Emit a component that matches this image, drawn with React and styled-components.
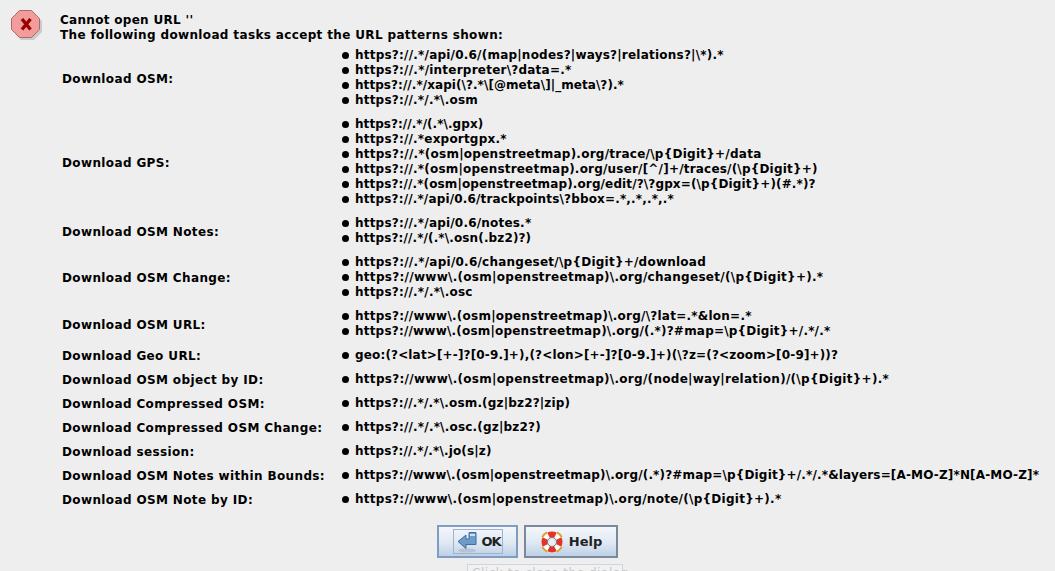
import React from 'react'
import styled, { createGlobalStyle } from 'styled-components'

const GlobalStyle = createGlobalStyle`
  html, body {
    margin: 0;
    padding: 0;
    width: 1055px;
    height: 571px;
    overflow: hidden;
    background: #eeeeee;
  }
  body {
    font-family: "DejaVu Sans", sans-serif;
    font-weight: bold;
    font-size: 12px;
    color: #000;
  }
`

const Dialog = styled.div`
  width: 1055px;
  height: 571px;
  box-sizing: border-box;
  padding: 10px 0 0 11px;
  display: flex;
  flex-direction: column;
  position: relative;
  overflow: hidden;
`
const Top = styled.div`
  display: flex;
`
const IconSlot = styled.div`
  width: 49px;
  flex: none;
`
const Intro = styled.div`
  padding-top: 3px;
  line-height: 15px;
  letter-spacing: 0.355px;
`
const IntroLine = styled.div`
  letter-spacing: ${p => p.$ls || 'inherit'};
`
const Table = styled.div`
  margin: 4px 0 0 51px;
  display: flex;
  flex-direction: column;
  gap: 9px;
`
const Row = styled.div`
  display: flex;
  align-items: center;
`
const Label = styled.div`
  width: 280px;
  flex: none;
  margin-top: 1px;
  letter-spacing: 0.37px;
`
const Patterns = styled.ul`
  list-style: none;
  margin: 0;
  padding: 0;
`
const Pattern = styled.li`
  height: 15px;
  line-height: 15px;
  padding-left: 13px;
  position: relative;
  white-space: nowrap;
  letter-spacing: ${p => p.$ls ?? 0.2}px;
  &::before {
    content: '';
    position: absolute;
    left: 0;
    top: 4px;
    width: 7px;
    height: 7px;
    border-radius: 50%;
    background: #000;
  }
`
const Buttons = styled.div`
  margin-top: 18px;
  margin-left: 426px;
  display: flex;
  gap: 6px;
`
const Button = styled.button`
  height: 33px;
  width: ${p => p.$w}px;
  box-sizing: border-box;
  display: flex;
  align-items: center;
  justify-content: center;
  gap: 5px;
  padding: 0;
  font: bold 13px "DejaVu Sans", sans-serif;
  color: #222;
  background: linear-gradient(#f4f7fb, #dfe8f3 55%, #bdd0e6);
  border: ${p => (p.$focus ? '2px solid #7f9dc0' : '2px solid #7a8a9c')};
`
const FocusRing = styled.span`
  display: flex;
  align-items: center;
  gap: 4px;
  width: 50px;
  height: 25px;
  box-sizing: border-box;
  padding: 0 0 0 2px;
  border: 1px solid #9fb3cc;
  letter-spacing: -1px;
`
const Tip = styled.div`
  position: absolute;
  left: 467px;
  top: 564px;
  width: 156px;
  height: 20px;
  box-sizing: border-box;
  padding: 1px 0 0 4px;
  background: #f1f1f1;
  border: 1px solid #ccd6e4;
  font: 12px/15px "DejaVu Sans", sans-serif;
  letter-spacing: 0.55px;
  color: #c8c8c8;
  white-space: nowrap;
`

const ErrorIcon = () => (
  <svg width="32" height="31" viewBox="0 0 32 31">
    <polygon points="10,3 23,3 31,11 31,22 23,30 10,30 3,22 3,11" fill="#b4b4b4" opacity="0.6" />
    <polygon points="8.5,0.5 20.5,0.5 28.5,8.5 28.5,19.5 20.5,27.5 8.5,27.5 0.5,19.5 0.5,8.5" fill="#f29c9c" stroke="#a86a6a" />
    <path d="M11 9 L19.5 19.5 M19.5 9 L11 19.5" stroke="#9a0000" strokeWidth="3.4" fill="none" />
  </svg>
)

const OkIcon = () => (
  <svg width="22" height="22" viewBox="0 0 22 22">
    <ellipse cx="11" cy="19.5" rx="9" ry="2" fill="#b8c4d2" />
    <path d="M13 1.5h7v12H10v4L2 10.5 10 4v4h3z" fill="#6d9ccb" stroke="#3f6d9f" />
    <path d="M14 3h5v2h-5z" fill="#cfe0f0" />
  </svg>
)

const HelpIcon = () => (
  <svg width="24" height="24" viewBox="0 0 24 24">
    <circle cx="12" cy="12" r="7.5" fill="none" stroke="#fff" strokeWidth="6" />
    <circle cx="12" cy="12" r="7.5" fill="none" stroke="#e5332a" strokeWidth="6" pathLength="40" strokeDasharray="6 4" strokeDashoffset="3" />
    <circle cx="12" cy="12" r="10.8" fill="none" stroke="#d9a520" strokeWidth="2" pathLength="40" strokeDasharray="4 6" strokeDashoffset="-3" />
    <circle cx="12" cy="12" r="4.5" fill="#e8eef5" stroke="#777" />
  </svg>
)

const ID = 'https?://www\\.(osm|openstreetmap)\\.org/'

// letter spacing per line where the text runs off from the reference width
const rows = [
  ['Download OSM:', [
    ['https?://.*/api/0.6/(map|nodes?|ways?|relations?|\\*).*', 0.22],
    ['https?://.*/interpreter\\?data=.*', 0.23],
    ['https?://.*/xapi(\\?.*\\[@meta\\]|_meta\\?).*', 0.06],
    ['https?://.*/.*\\.osm'],
  ]],
  ['Download GPS:', [
    ['https?://.*/(.*\\.gpx)', 0.05],
    ['https?://.*exportgpx.*'],
    ['https?://.*(osm|openstreetmap).org/trace/\\p{Digit}+/data', 0.25],
    ['https?://.*(osm|openstreetmap).org/user/[^/]+/traces/(\\p{Digit}+)'],
    ['https?://.*(osm|openstreetmap).org/edit/?\\?gpx=(\\p{Digit}+)(#.*)?', 0.13],
    ['https?://.*/api/0.6/trackpoints\\?bbox=.*,.*,.*,.*', 0.16],
  ]],
  ['Download OSM Notes:', [
    ['https?://.*/api/0.6/notes.*'],
    ['https?://.*/(.*\\.osn(.bz2)?)', 0.13],
  ]],
  ['Download OSM Change:', [
    ['https?://.*/api/0.6/changeset/\\p{Digit}+/download', 0.24],
    [ID + 'changeset/(\\p{Digit}+).*', 0.29],
    ['https?://.*/.*\\.osc'],
  ]],
  ['Download OSM URL:', [
    [ID + '\\?lat=.*&lon=.*', 0.24],
    [ID + '(.*)?#map=\\p{Digit}+/.*/.*'],
  ]],
  ['Download Geo URL:', [['geo:(?<lat>[+-]?[0-9.]+),(?<lon>[+-]?[0-9.]+)(\\?z=(?<zoom>[0-9]+))?', 0.155]]],
  ['Download OSM object by ID:', [[ID + '(node|way|relation)/(\\p{Digit}+).*', 0.29]]],
  ['Download Compressed OSM:', [['https?://.*/.*\\.osm.(gz|bz2?|zip)', 0.17]]],
  ['Download Compressed OSM Change:', [['https?://.*/.*\\.osc.(gz|bz2?)']]],
  ['Download session:', [['https?://.*/.*\\.jo(s|z)', 0.15]]],
  ['Download OSM Notes within Bounds:', [[ID + '(.*)?#map=\\p{Digit}+/.*/.*&layers=[A-MO-Z]*N[A-MO-Z]*', 0.165]]],
  ['Download OSM Note by ID:', [[ID + 'note/(\\p{Digit}+).*', 0.27]]],
]

export default function App() {
  return (
    <Dialog>
      <GlobalStyle />
      <Top>
        <IconSlot><ErrorIcon /></IconSlot>
        <Intro>
          <IntroLine $ls="0.3px">Cannot open URL ''</IntroLine>
          <IntroLine>The following download tasks accept the URL patterns shown:</IntroLine>
        </Intro>
      </Top>
      <Table>
        {rows.map(([label, patterns]) => (
          <Row key={label}>
            <Label>{label}</Label>
            <Patterns>
              {patterns.map(([text, ls]) => <Pattern key={text} $ls={ls}>{text}</Pattern>)}
            </Patterns>
          </Row>
        ))}
      </Table>
      <Buttons>
        <Button $focus $w={81}>
          <FocusRing><OkIcon />OK</FocusRing>
        </Button>
        <Button $w={94}><HelpIcon />Help</Button>
      </Buttons>
      <Tip>Click to close the dialog</Tip>
    </Dialog>
  )
}
